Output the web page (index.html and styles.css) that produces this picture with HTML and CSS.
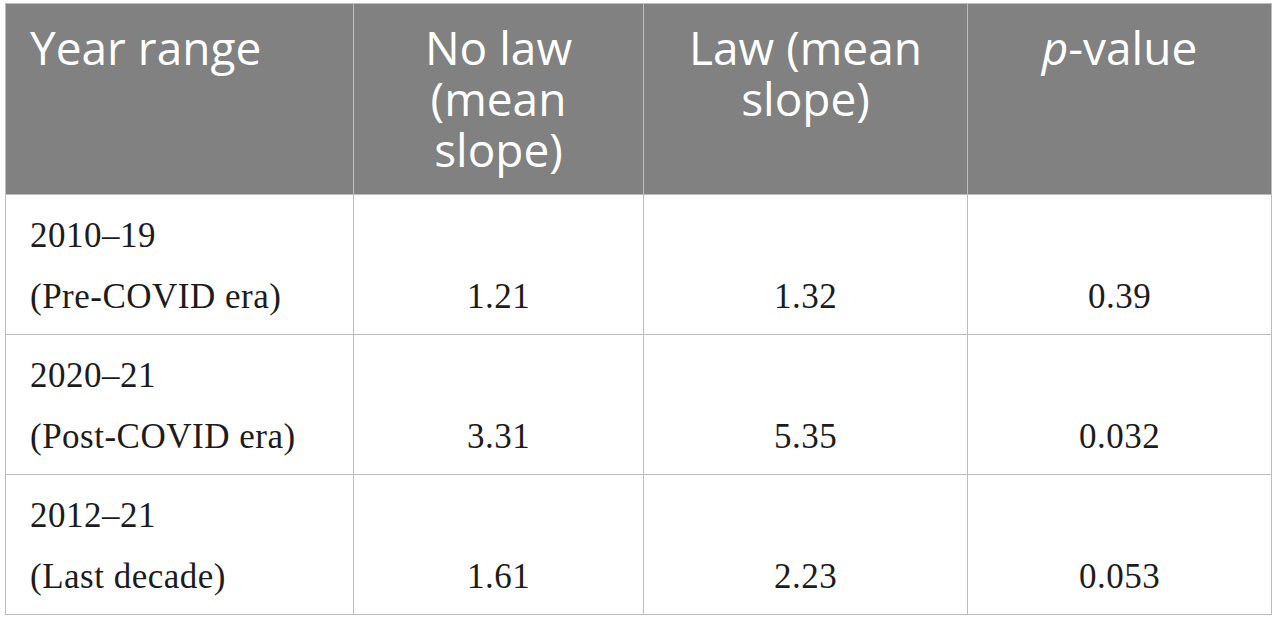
FILE: index.html
```html
<!DOCTYPE html>
<html lang="en">
<head>
    <meta charset="UTF-8">
    <title>Mean slope by year range</title>
    <link rel="stylesheet" href="styles.css">
</head>
<body>
    <table class="slopes">
        <colgroup>
            <col class="c-range">
            <col class="c-nolaw">
            <col class="c-law">
            <col class="c-p">
        </colgroup>
        <thead>
            <tr>
                <th class="left">Year range</th>
                <th>No law (mean slope)</th>
                <th>Law (mean slope)</th>
                <th><i>p</i>-value</th>
            </tr>
        </thead>
        <tbody>
            <tr>
                <td class="left">2010–19<br>(Pre-COVID era)</td>
                <td>1.21</td>
                <td>1.32</td>
                <td>0.39</td>
            </tr>
            <tr>
                <td class="left">2020–21<br>(Post-COVID era)</td>
                <td>3.31</td>
                <td>5.35</td>
                <td>0.032</td>
            </tr>
            <tr>
                <td class="left">2012–21<br>(Last decade)</td>
                <td>1.61</td>
                <td>2.23</td>
                <td>0.053</td>
            </tr>
        </tbody>
    </table>
</body>
</html>
```

FILE: styles.css
```css
* {
    margin: 0;
    padding: 0;
    box-sizing: border-box;
}

body {
    background: #fff;
    padding: 3px 5px;
}

.slopes {
    width: 1266px;
    border-collapse: collapse;
    table-layout: fixed;
}

.c-range { width: 348px; }
.c-nolaw { width: 290px; }
.c-law   { width: 324px; }
.c-p     { width: 304px; }

.slopes th,
.slopes td {
    border: 1px solid #bdbdbd;
}

.slopes th {
    background: #808180;
    color: #fff;
    font-family: 'Open Sans', sans-serif;
    font-weight: 400;
    font-size: 46px;
    line-height: 51px;
    text-align: center;
    vertical-align: top;
    padding: 18px 24px 19px;
}

.slopes td {
    color: #1c1c1c;
    font-family: 'Liberation Serif', serif;
    font-size: 35px;
    line-height: 61px;
    letter-spacing: 0.5px;
    text-align: center;
    vertical-align: bottom;
    padding: 10px 24px 7px;
}

.slopes .left {
    text-align: left;
}
```
